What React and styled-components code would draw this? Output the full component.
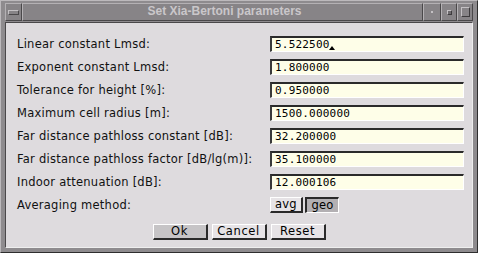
import React from 'react'
import styled, { createGlobalStyle } from 'styled-components'

const GlobalStyle = createGlobalStyle`
    html, body {
        margin: 0;
        padding: 0;
        background: #2e2e2e;
    }
`

const fields = [
    { label: 'Linear constant Lmsd:', value: '5.522500', caret: true },
    { label: 'Exponent constant Lmsd:', value: '1.800000' },
    { label: 'Tolerance for height [%]:', value: '0.950000' },
    { label: 'Maximum cell radius [m]:', value: '1500.000000' },
    { label: 'Far distance pathloss constant [dB]:', value: '32.200000' },
    { label: 'Far distance pathloss factor [dB/lg(m)]:', value: '35.100000' },
    { label: 'Indoor attenuation [dB]:', value: '12.000106' },
]

function App() {
    return (
        <>
            <GlobalStyle />
            <Frame>
                <TitleBar>
                    <WinButton width={17}>
                        <MenuBar />
                    </WinButton>
                    <Title>Set Xia-Bertoni parameters</Title>
                    <WinButton width={18}>
                        <Dot />
                    </WinButton>
                    <WinButton width={16}>
                        <SmallBox />
                    </WinButton>
                    <WinButton width={16}>
                        <BigBox />
                    </WinButton>
                </TitleBar>
                <Content>
                    <Form>
                        {fields.map((f) => (
                            <React.Fragment key={f.label}>
                                <Label>{f.label}</Label>
                                <Field>
                                    {f.value}
                                    {f.caret && (
                                        <svg width="6" height="4" viewBox="0 0 6 4">
                                            <polygon points="0,4 3,0 6,4" fill="#000" />
                                        </svg>
                                    )}
                                </Field>
                            </React.Fragment>
                        ))}
                        <Label>Averaging method:</Label>
                        <Toggles>
                            <Toggle width={33}>avg</Toggle>
                            <Toggle width={34} pressed>geo</Toggle>
                        </Toggles>
                    </Form>
                    <ButtonRow>
                        <PushButton isDefault>Ok</PushButton>
                        <PushButton>Cancel</PushButton>
                        <PushButton>Reset</PushButton>
                    </ButtonRow>
                </Content>
            </Frame>
        </>
    )
}

export default App

const Frame = styled.div`
    width: 478px;
    height: 253px;
    box-sizing: border-box;
    background: #8e8b8e;
    border: 1px solid;
    border-color: #bcb9bc #2e2e2e #2e2e2e #bcb9bc;
    padding: 2px 4px 4px 4px;
    display: flex;
    flex-direction: column;
    gap: 1px;
`

const TitleBar = styled.div`
    height: 18px;
    display: flex;
    flex-shrink: 0;
`

const WinButton = styled.div`
    width: ${props => props.width}px;
    height: 18px;
    box-sizing: border-box;
    background: #878487;
    border: 1px solid;
    border-color: #b4b1b4 #4a484a #4a484a #b4b1b4;
    display: flex;
    align-items: center;
    justify-content: center;
`

const MenuBar = styled.div`
    width: 9px;
    height: 3px;
    border: 1px solid;
    border-color: #c4c1c4 #4a484a #4a484a #c4c1c4;
`

const Dot = styled.div`
    width: 2px;
    height: 2px;
    background: #c4c1c4;
`

const SmallBox = styled.div`
    width: 3px;
    height: 3px;
    border: 1px solid;
    border-color: #c4c1c4 #3e3c3e #3e3c3e #c4c1c4;
    background: #6e6b6e;
`

const BigBox = styled.div`
    width: 7px;
    height: 8px;
    border: 1px solid;
    border-color: #c4c1c4 #3e3c3e #3e3c3e #c4c1c4;
`

const Title = styled.div`
    flex: 1;
    height: 18px;
    box-sizing: border-box;
    background: #878487;
    border: 1px solid;
    border-color: #b4b1b4 #4a484a #4a484a #b4b1b4;
    color: #cac7ca;
    font-family: "Liberation Sans", Arial, sans-serif;
    font-weight: bold;
    font-size: 12px;
    line-height: 15px;
    text-align: center;
    padding-left: 4px;
`

const Content = styled.div`
    flex: 1;
    background: #dedbde;
    border: 1px solid;
    border-color: #4a484a #eeeeee #eeeeee #4a484a;
    padding: 13px 8px 0 11px;
    display: flex;
    flex-direction: column;
    font-family: "DejaVu Sans", Verdana, sans-serif;
    font-size: 11px;
    letter-spacing: 0.2px;
    color: #000;
`

const Form = styled.div`
    display: grid;
    grid-template-columns: 253px 194px;
    grid-auto-rows: 16px;
    row-gap: 7px;
`

const Label = styled.div`
    align-self: center;
    white-space: nowrap;
    font-size: 11.5px;
    letter-spacing: 0.25px;
    line-height: 16px;
    color: #111;
`

const Field = styled.div`
    box-sizing: border-box;
    height: 16px;
    background: #fefee8;
    border-style: solid;
    border-width: 2px 1px 1px 2px;
    border-color: #2a2a2a #ffffff #ffffff #3a3a3a;
    padding-left: 3px;
    font-family: "DejaVu Sans Mono", "Liberation Mono", monospace;
    font-size: 11px;
    letter-spacing: 0.2px;
    line-height: 13px;
    display: flex;
    align-items: center;

    svg {
        align-self: flex-end;
        margin-bottom: 1px;
        margin-left: -1px;
    }
`

const Toggles = styled.div`
    display: flex;
    gap: 2px;
`

const Toggle = styled.div`
    width: ${props => props.width}px;
    height: 16px;
    box-sizing: border-box;
    border: 1px solid;
    border-width: ${props => props.pressed ? '2px 1px 1px 2px' : '1px 2px 2px 1px'};
    border-color: ${props => props.pressed
        ? '#2a2a2a #ffffff #ffffff #2a2a2a'
        : '#ffffff #2a2a2a #2a2a2a #ffffff'};
    background: ${props => props.pressed ? '#b3b0b3' : '#e6e3e6'};
    font-size: 11.5px;
    line-height: 12px;
    text-align: center;
`

const ButtonRow = styled.div`
    display: flex;
    justify-content: center;
    gap: 4px;
    margin-top: 11px;
    padding-right: 3px;
`

const PushButton = styled.div`
    width: 55px;
    height: 16px;
    box-sizing: border-box;
    border-style: solid;
    border-width: 1px 2px 2px 1px;
    border-color: #ffffff #2a2a2a #2a2a2a #ffffff;
    background: ${props => props.isDefault ? '#c6c4c6' : '#e6e3e6'};
    font-size: 11.5px;
    letter-spacing: 0.6px;
    line-height: 13px;
    text-align: center;
`
